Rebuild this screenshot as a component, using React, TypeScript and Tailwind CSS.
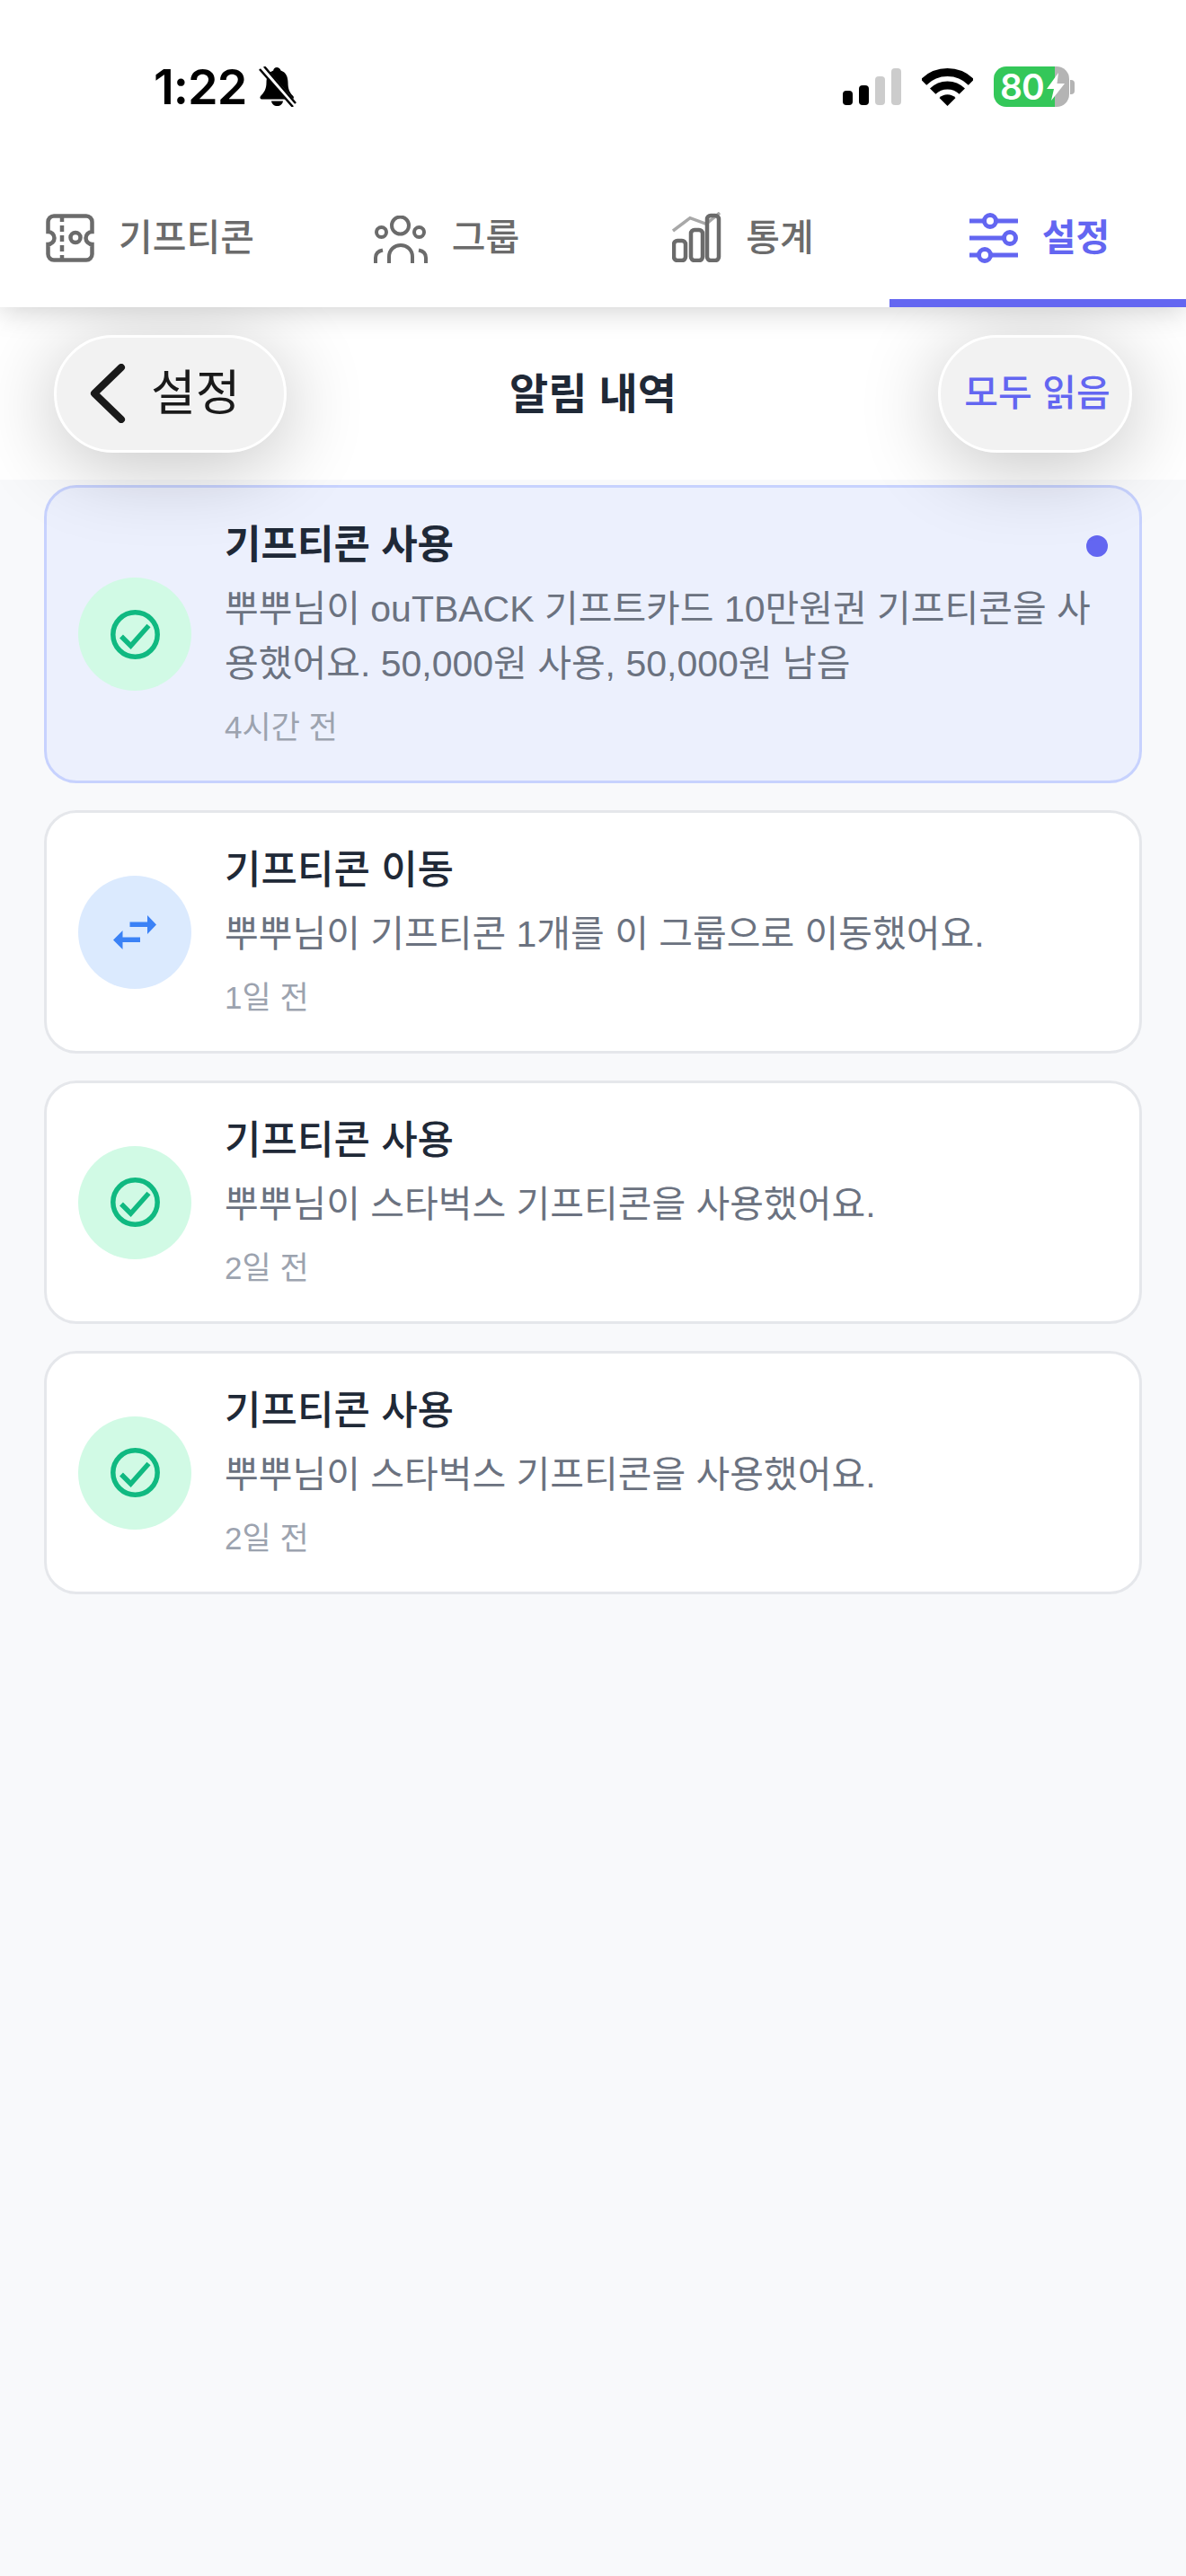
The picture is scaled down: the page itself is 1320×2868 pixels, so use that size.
import type { ReactNode } from 'react';

const FONT = "font-['Liberation_Sans','Noto_Sans_CJK_KR',sans-serif]";

function BellOff() {
  return (
    <svg width="42" height="45" viewBox="0 0 42 45">
      <path d="M20 1c-2 0-3.500 1.500-3.800 3.500C10.500 6.500 8.500 12 8.500 18c0 7-2.500 11-6.500 15-1.200 1.500-.5 3.500 1.500 3.500h33c2.500 0 3-2 1.800-3.500-4-4-5.800-8-5.800-15 0-6-2-11.500-8-13.500C24 2.500 22 1 20 1z" fill="#000" />
      <path d="M14 38.500h13c-.5 3.500-3 5.500-6.500 5.500s-6-2-6.500-5.500z" fill="#000" />
      <path d="M3 0L42 45" stroke="#fff" strokeWidth="6" />
      <path d="M1 3L38 45" stroke="#000" strokeWidth="2.500" />
      <path d="M6 0L41 41" stroke="#000" strokeWidth="2.500" />
    </svg>
  );
}

function Wifi() {
  return (
    <svg width="57" height="42" viewBox="0 0 57 42">
      <path d="M2 15.500A37.500 37.500 0 0 1 55 15.500" fill="none" stroke="#000" strokeWidth="9" />
      <path d="M12.200 25.700A23 23 0 0 1 44.800 25.700" fill="none" stroke="#000" strokeWidth="9" />
      <path d="M28.500 42L19.500 33A12.700 12.700 0 0 1 37.500 33Z" fill="#000" />
    </svg>
  );
}

function StatusBar() {
  return (
    <div className="flex h-[197px] items-start justify-between pl-[171px] pr-[124px] pt-[74px]">
      <div className="flex h-[45px] items-center gap-[14px]">
        <span className="font-['Inter',sans-serif] text-[54px] font-semibold leading-none tracking-[-1px] text-black">1:22</span>
        <BellOff />
      </div>
      <div className="flex h-[45px] items-center">
        <div className="flex items-end gap-[7px]">
          <div className="h-[16px] w-[11px] rounded-[4px] bg-black" />
          <div className="h-[22px] w-[11px] rounded-[4px] bg-black" />
          <div className="h-[32px] w-[11px] rounded-[4px] bg-[#cccccc]" />
          <div className="h-[41px] w-[11px] rounded-[4px] bg-[#cccccc]" />
        </div>
        <div className="ml-[23px]">
          <Wifi />
        </div>
        <div className="ml-[23px] flex items-center">
          <div className="relative flex h-[45px] w-[84px] overflow-hidden rounded-[14px]">
            <div className="w-[68px] bg-[#34c759]" />
            <div className="flex-1 bg-[#b4b4b4]" />
            <div className="absolute inset-0 flex items-center pl-[7px]">
              <span className="font-['Inter',sans-serif] text-[39px] font-semibold leading-none tracking-[-1px] text-white">80</span>
              <svg width="22" height="31" viewBox="0 0 22 31" className="ml-[2px]">
                <path d="M14 0L1 18h8L6 31l15-19h-8.500z" fill="#fff" />
              </svg>
            </div>
          </div>
          <div className="ml-[1px] h-[16px] w-[5px] rounded-r-[4px] bg-[#b4b4b4]" />
        </div>
      </div>
    </div>
  );
}

function TicketIcon() {
  return (
    <svg width="54" height="54" viewBox="0 0 54 54" fill="none" stroke="#6b6b6b" strokeWidth="4.500">
      <path d="M9 2.500H45a6.500 6.500 0 0 1 6.500 6.500V20a7 7 0 0 0 0 14V45a6.500 6.500 0 0 1-6.500 6.500H9a6.500 6.500 0 0 1-6.500-6.500V34a7 7 0 0 0 0-14V9a6.500 6.500 0 0 1 6.500-6.500Z" />
      <path d="M18 2V52" strokeDasharray="7 4" />
      <circle cx="33" cy="26.500" r="5.500" />
    </svg>
  );
}

function GroupIcon() {
  return (
    <svg width="60" height="54" viewBox="0 0 60 54" fill="none" stroke="#6b6b6b" strokeWidth="4" className="mt-[4px]">
      <circle cx="29.500" cy="11" r="9.500" />
      <circle cx="8.500" cy="18.500" r="5.500" />
      <circle cx="50.500" cy="18.500" r="5.500" />
      <path d="M17 53V46C17 38 23 33 30 33C37 33 43 38 43 46V53" />
      <path d="M2 53V47C2 42 5 39.500 10 38.500" />
      <path d="M58 53V47C58 42 55 39.500 50 38.500" />
    </svg>
  );
}

function ChartIcon() {
  return (
    <svg width="55" height="56" viewBox="0 0 55 56" fill="none" className="-mt-[3px]">
      <path d="M1 21L20 6.700L38 13.300L53 1" stroke="#a8a8a8" strokeWidth="3.500" />
      <rect x="2" y="32" width="13" height="22" rx="4" stroke="#6b6b6b" strokeWidth="4.500" />
      <rect x="21" y="20" width="13" height="34" rx="4" stroke="#6b6b6b" strokeWidth="4.500" />
      <rect x="39" y="4" width="13" height="50" rx="4" stroke="#6b6b6b" strokeWidth="4.500" />
    </svg>
  );
}

function SlidersIcon() {
  return (
    <svg width="54" height="56" viewBox="0 0 54 56" fill="none" stroke="#6366f1" strokeWidth="5">
      <path d="M0 9H54" />
      <path d="M0 28H38" />
      <path d="M0 47H54" />
      <circle cx="23" cy="9" r="6.500" fill="#fff" />
      <circle cx="45" cy="28" r="6.500" fill="#fff" />
      <circle cx="17" cy="47" r="6.500" fill="#fff" />
    </svg>
  );
}

function Tab({ icon, label, active }: { icon: ReactNode; label: string; active?: boolean }) {
  return (
    <div className={`flex flex-1 items-center justify-center gap-[27px] border-b-[9px] pl-[4px] ${active ? 'border-[#6366f1]' : 'border-transparent'}`}>
      {icon}
      <span className={`text-[41px] leading-none ${active ? 'font-bold text-[#6366f1]' : 'font-medium text-[#6b6b6b]'}`}>{label}</span>
    </div>
  );
}

function CheckIcon() {
  return (
    <svg width="55" height="55" viewBox="0 0 55 55" fill="none" stroke="#10b981" strokeWidth="5.500">
      <circle cx="27.500" cy="27.500" r="24.700" />
      <path d="M12 29.500L22.500 40L42.500 17.500" />
    </svg>
  );
}

function ArrowsIcon() {
  return (
    <svg width="48" height="38" viewBox="0 0 48 38" fill="#3b82f6">
      <path d="M18.500 7.500H38V0L48 10.500L38 21V13H18.500Z" />
      <path d="M30 24.500H10.500V17L0 27.500L10.500 38V30H30Z" />
    </svg>
  );
}

interface Item {
  title: string;
  body: string;
  time: string;
  kind: 'use' | 'move';
  unread?: boolean;
}

const items: Item[] = [
  { title: '기프티콘 사용', body: '뿌뿌님이 ouTBACK 기프트카드 10만원권 기프티콘을 사용했어요. 50,000원 사용, 50,000원 남음', time: '4시간 전', kind: 'use', unread: true },
  { title: '기프티콘 이동', body: '뿌뿌님이 기프티콘 1개를 이 그룹으로 이동했어요.', time: '1일 전', kind: 'move' },
  { title: '기프티콘 사용', body: '뿌뿌님이 스타벅스 기프티콘을 사용했어요.', time: '2일 전', kind: 'use' },
  { title: '기프티콘 사용', body: '뿌뿌님이 스타벅스 기프티콘을 사용했어요.', time: '2일 전', kind: 'use' },
];

function NotificationCard({ item }: { item: Item }) {
  return (
    <div className={`relative flex items-center gap-[37px] rounded-[36px] border-[3px] px-[35px] py-[33px] ${item.unread ? 'border-[#c7d2fe] bg-[#ecf0fd]' : 'border-[#e5e7eb] bg-white'}`}>
      <div className={`flex h-[126px] w-[126px] shrink-0 items-center justify-center rounded-full ${item.kind === 'use' ? 'bg-[#d1fae5]' : 'bg-[#dbeafe]'}`}>
        {item.kind === 'use' ? <CheckIcon /> : <ArrowsIcon />}
      </div>
      <div className="min-w-0 flex-1">
        <div className={`text-[44px] leading-[62px] text-[#1f2937] ${item.unread ? 'font-bold' : 'font-medium'}`}>{item.title}</div>
        <div className="mt-[10px] text-[41px] leading-[61px] text-[#6b7280]">{item.body}</div>
        <div className="mt-[14px] text-[35px] leading-[52px] text-[#9ca3af]">{item.time}</div>
      </div>
      {item.unread && <div className="absolute right-[35px] top-[53px] h-[24px] w-[24px] rounded-full bg-[#6366f1]" />}
    </div>
  );
}

export default function App() {
  return (
    <div className={`${FONT} min-h-[2868px] bg-[#f8f9fb]`}>
      <div className="relative z-20 bg-white shadow-[0_4px_30px_rgba(0,0,0,0.18)]">
        <StatusBar />
        <div className="flex h-[145px]">
          <Tab icon={<TicketIcon />} label="기프티콘" />
          <Tab icon={<GroupIcon />} label="그룹" />
          <Tab icon={<ChartIcon />} label="통계" />
          <Tab icon={<SlidersIcon />} label="설정" active />
        </div>
      </div>

      <div className="relative z-10 grid h-[192px] grid-cols-[1fr_auto_1fr] items-center bg-white px-[60px]">
        <div className="flex h-[131px] w-[259px] items-center justify-self-start rounded-full border-[3px] border-white bg-[#f2f2f2] pl-[37px] shadow-[0_14px_90px_rgba(0,0,0,0.24)]">
          <svg width="40" height="66" viewBox="0 0 40 66" fill="none" stroke="#1a1a1a" strokeWidth="8" strokeLinecap="round" strokeLinejoin="round">
            <path d="M35 4L5 33L35 62" />
          </svg>
          <span className="ml-[28px] text-[54px] leading-none text-[#1a1a1a]">설정</span>
        </div>
        <div className="text-[47px] font-bold leading-none text-[#1f2937]">알림 내역</div>
        <div className="flex h-[131px] w-[216px] items-center justify-center justify-self-end rounded-full border-[3px] border-white bg-[#f2f2f2] pl-[5px] text-[41px] font-medium leading-none text-[#6366f1] shadow-[0_14px_90px_rgba(0,0,0,0.24)]">
          모두 읽음
        </div>
      </div>

      <div className="flex flex-col gap-[30px] px-[49px] pt-[6px]">
        {items.map((item, i) => (
          <NotificationCard key={i} item={item} />
        ))}
      </div>
    </div>
  );
}
